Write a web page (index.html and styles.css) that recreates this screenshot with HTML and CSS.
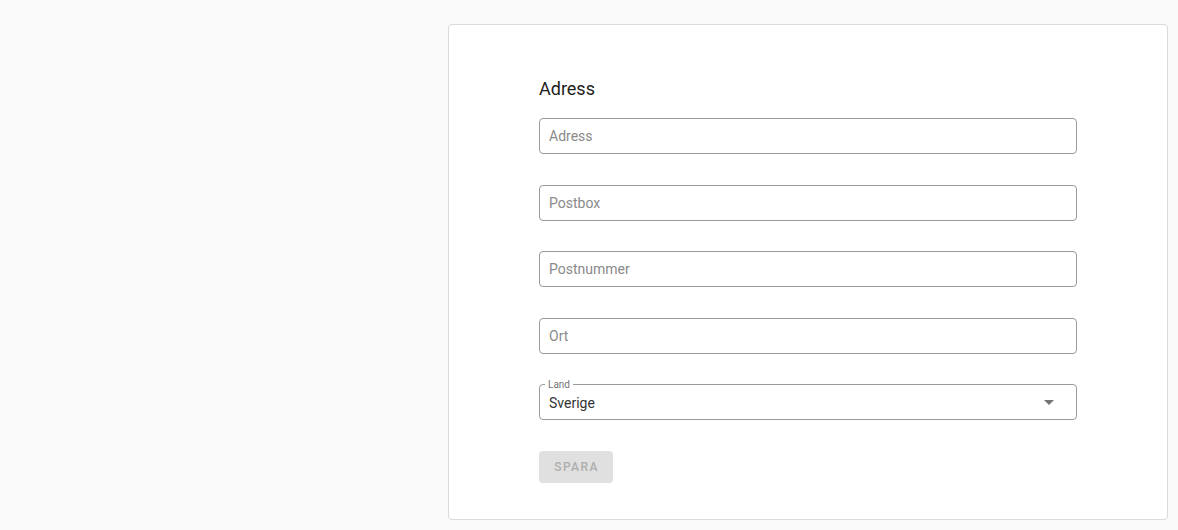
FILE: index.html
```html
<!DOCTYPE html>
<html lang="sv">
<head>
<meta charset="utf-8">
<title>Adress</title>
<link rel="stylesheet" href="styles.css">
</head>
<body>
<div class="page">
  <div class="card">
    <h2 class="title">Adress</h2>
    <div class="fields">
      <div class="field"><span class="placeholder">Adress</span></div>
      <div class="field"><span class="placeholder">Postbox</span></div>
      <div class="field"><span class="placeholder">Postnummer</span></div>
      <div class="field"><span class="placeholder">Ort</span></div>
      <div class="field select">
        <span class="legend">Land</span>
        <span class="value">Sverige</span>
        <svg class="arrow" width="10" height="5" viewBox="0 0 10 5"><path d="M0 0h10L5 5z" fill="#757575"/></svg>
      </div>
    </div>
    <button class="btn" disabled>SPARA</button>
  </div>
</div>
</body>
</html>
```
FILE: styles.css
```css
html, body {
  margin: 0;
  padding: 0;
  background: #fafafa;
  font-family: Roboto, "Liberation Sans", sans-serif;
}
.page {
  display: flex;
  justify-content: flex-end;
  padding: 24px 10px 0 0;
  height: 530px;
  box-sizing: border-box;
}
.card {
  width: 720px;
  height: 496px;
  box-sizing: border-box;
  background: #fff;
  border: 1px solid #dcdcdc;
  border-radius: 4px;
  padding: 52px 90px 36px 90px;
  display: flex;
  flex-direction: column;
}
.title {
  margin: 0 0 17px 0;
  font-size: 18px;
  line-height: 24px;
  font-weight: 400;
  color: #212121;
}
.fields {
  display: flex;
  flex-direction: column;
  gap: 30.5px;
}
.field {
  position: relative;
  height: 36px;
  box-sizing: border-box;
  border: 1px solid #9a9a9a;
  border-radius: 4px;
  display: flex;
  align-items: center;
  padding: 0 9px;
  font-size: 14px;
}
.placeholder {
  color: #8a8a8a;
}
.select .value {
  color: #333;
  flex: 1;
  padding-top: 1px;
}
.legend {
  position: absolute;
  left: 5px;
  top: -5px;
  padding: 0 3px;
  background: #fff;
  font-size: 10px;
  line-height: 10px;
  color: #757575;
}
.arrow {
  margin-right: 13px;
}
.btn {
  margin-top: 31px;
  align-self: flex-start;
  width: 74px;
  height: 32px;
  border: none;
  border-radius: 4px;
  background: #e0e0e0;
  color: #aeaeae;
  font-family: Roboto, "Liberation Sans", sans-serif;
  font-size: 12px;
  font-weight: 500;
  letter-spacing: 1.4px;
  padding: 0 0 0 1px;
}
```
